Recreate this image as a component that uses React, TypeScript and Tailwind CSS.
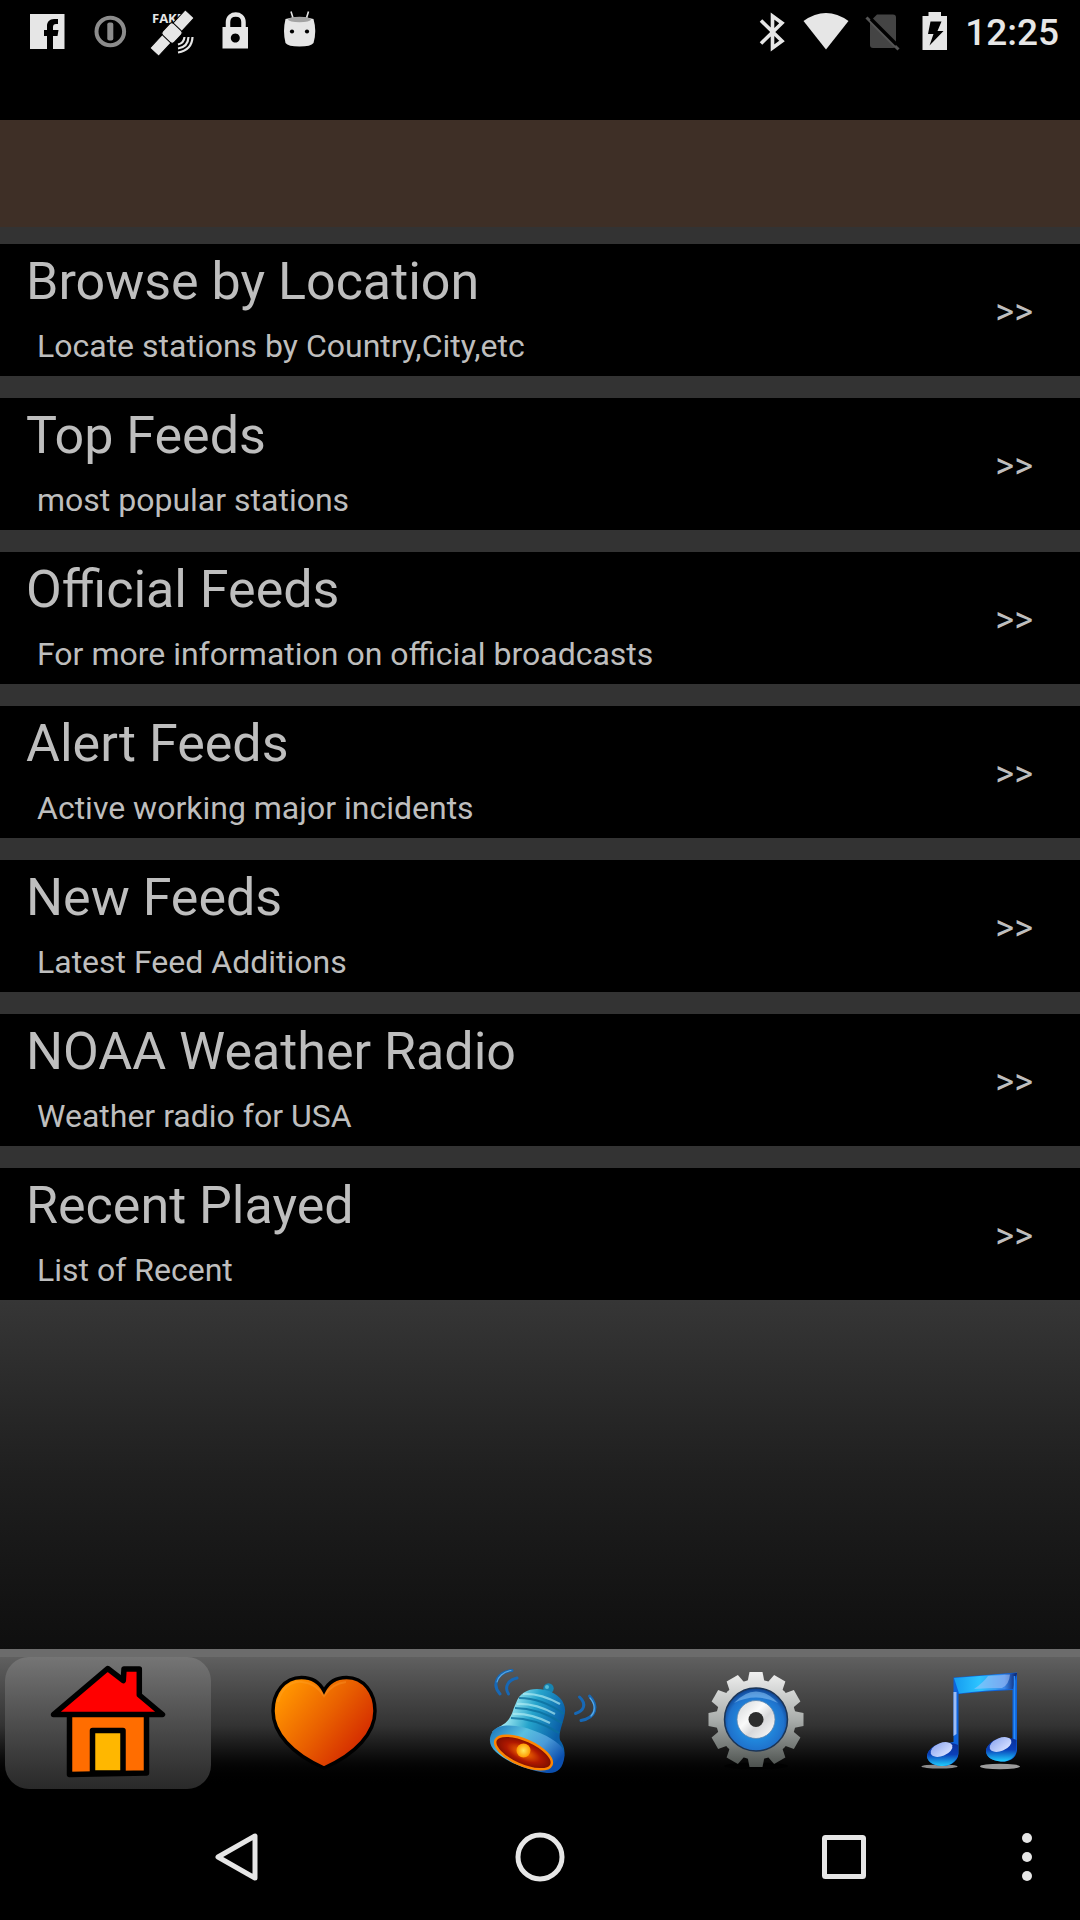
import type { ReactNode } from "react";

const feeds = [
  { title: "Browse by Location", detail: "Locate stations by Country,City,etc" },
  { title: "Top Feeds", detail: "most popular stations" },
  { title: "Official Feeds", detail: "For more information on official broadcasts" },
  { title: "Alert Feeds", detail: "Active working major incidents" },
  { title: "New Feeds", detail: "Latest Feed Additions" },
  { title: "NOAA Weather Radio", detail: "Weather radio for USA" },
  { title: "Recent Played", detail: "List of Recent" },
];

function Glyph({ children }: { children: ReactNode }) {
  return (
    <svg className="size-[63px]" viewBox="0 0 63 63" fill="#e6e6e6" aria-hidden="true">
      {children}
    </svg>
  );
}

function SmallGlyph({ children }: { children: ReactNode }) {
  return (
    <svg className="h-[63px] w-[54px]" viewBox="0 0 54 63" fill="#e6e6e6" aria-hidden="true">
      {children}
    </svg>
  );
}

function StatusBar() {
  return (
    <div className="flex items-center justify-between pr-[21px] pl-4">
      <div className="flex">
        <Glyph>
          <path d="M14 14H48.500V49H37V36H41.500L42.500 30H37V27C37 25 38 24 40 24H42V19H38C33.500 19 31 22 31 26V30H28V36H31V49H14Z" />
        </Glyph>
        <Glyph>
          <circle cx="31.300" cy="31.500" r="13.800" fill="none" stroke="#8c8c8c" strokeWidth="4" />
          <rect x="28.300" y="22.500" width="6" height="18" rx="2" fill="#8c8c8c" />
        </Glyph>
        <Glyph>
          <text x="10" y="23" fontFamily="Open Sans, sans-serif" fontWeight="700" fontSize="13">FAKE</text>
          <g transform="translate(30 33) rotate(-47)" stroke="#000" strokeWidth="1">
            <rect x="-26" y="-6" width="19" height="12" />
            <rect x="7" y="-6" width="19" height="12" />
            <rect x="-8" y="-8" width="16" height="16" rx="3" />
          </g>
          <g fill="none" stroke="#e6e6e6" strokeWidth="2.200">
            <path d="M36 44.500Q42 43 42.500 37M36 48.500Q46 47 46.500 37M36 52.500Q50 50 50.500 37" />
          </g>
        </Glyph>
        <Glyph>
          <path d="M23 28V22C23 12 38.500 12 38.500 22V28" fill="none" stroke="#e6e6e6" strokeWidth="4.500" />
          <path fillRule="evenodd" d="M17.500 27H43V48.500H17.500ZM30.300 33.500A4.500 4.500 0 1 0 30.310 33.500Z" />
        </Glyph>
        <Glyph>
          <path d="M23 11.500L25 18M40.500 11.500L38.500 18" stroke="#e6e6e6" strokeWidth="1.600" />
          <path d="M17.500 19Q32 15 45.500 19Q49 31 45.500 43Q43 46.500 31.500 46.500Q20 46.500 17.500 43Q14.500 31 17.500 19Z" />
          <ellipse cx="31.500" cy="19.500" rx="11.500" ry="2.800" fill="#a3a3a3" />
          <circle cx="24" cy="31.500" r="2.100" fill="#000" />
          <circle cx="39" cy="31.500" r="2.100" fill="#000" />
        </Glyph>
      </div>
      <div className="flex items-center">
        <SmallGlyph>
          <path d="M16 20.500L37 41L27.500 48V16L37 23L16 43.500" fill="none" stroke="#e6e6e6" strokeWidth="3.600" />
        </SmallGlyph>
        <SmallGlyph>
          <path d="M4.500 21Q27 5 49.500 21L27 49.500Z" />
        </SmallGlyph>
        <SmallGlyph>
          <path d="M17 21.500L24 14.500H40Q43 14.500 43 17.500V45Q43 48 40 48H20Q17 48 17 45Z" fill="#444" />
          <path d="M13.500 17.500L45.500 49.500" stroke="#555" strokeWidth="3" />
          <path d="M18 19L43.500 44.500" stroke="#000" strokeWidth="3.400" />
        </SmallGlyph>
        <SmallGlyph>
          <path fillRule="evenodd" d="M21.500 12H34V16H40V50H15.500V16H21.500ZM23.500 21.500L21 34H26.500L22.500 45.500L36.500 31H30.500L34.500 21.500Z" />
        </SmallGlyph>
        <time className="pt-0.5 pl-1 text-[37px] leading-10 font-medium text-[#e6e6e6]">12:25</time>
      </div>
    </div>
  );
}

function TabIcon({ children }: { children: ReactNode }) {
  return (
    <svg className="size-[120px]" viewBox="0 0 120 120" aria-hidden="true">
      {children}
    </svg>
  );
}

function HomeIcon() {
  return (
    <TabIcon>
      <g stroke="#000" strokeWidth="5.500" strokeLinejoin="round">
        <path d="M21.500 52H98.500V111L21.500 112.500Z" fill="#ff6d00" />
        <path d="M44.500 68.500H75V111H44.500Z" fill="#ffb700" />
        <path d="M5.500 52.500L59.700 6.500L75.300 18.500L76 7H91.300V33L114.500 52.500Z" fill="#f00" />
      </g>
    </TabIcon>
  );
}

function HeartIcon() {
  return (
    <TabIcon>
      <defs>
        <linearGradient id="heart" x1="0.100" y1="0.200" x2="0.900" y2="0.750">
          <stop offset="0" stopColor="#ff9200" />
          <stop offset="0.500" stopColor="#e96000" />
          <stop offset="1" stopColor="#d32800" />
        </linearGradient>
      </defs>
      <path
        d="M60 29C55 19 47 15.500 37.500 15.500C20 15.500 9 31 9 49C9 71 28 92 60 106C92 92 111 71 111 49C111 31 100 15.500 82.500 15.500C73 15.500 65 19 60 29Z"
        fill="url(#heart)"
        stroke="#000"
        strokeWidth="3.500"
      />
      <path d="M14 40C18 24 29 19 38 20C49 21 55 26 60 34C65 26 73 21 82 20" fill="none" stroke="#ffae42" strokeOpacity="0.250" strokeWidth="2" />
    </TabIcon>
  );
}

function BellIcon() {
  return (
    <TabIcon>
      <defs>
        <linearGradient id="bellBody" x1="0" y1="0" x2="1" y2="0.350">
          <stop offset="0" stopColor="#1187b5" />
          <stop offset="0.300" stopColor="#9be6f0" />
          <stop offset="0.600" stopColor="#25a4cc" />
          <stop offset="1" stopColor="#0a5fa8" />
        </linearGradient>
        <linearGradient id="bellRim" x1="0" y1="0" x2="1" y2="0.600">
          <stop offset="0" stopColor="#1570b8" />
          <stop offset="0.400" stopColor="#59c0e0" />
          <stop offset="0.700" stopColor="#4a9bd8" />
          <stop offset="1" stopColor="#0b4fae" />
        </linearGradient>
        <radialGradient id="bellInside">
          <stop offset="0" stopColor="#ff7a00" />
          <stop offset="0.600" stopColor="#b01800" />
          <stop offset="1" stopColor="#7a0d00" />
        </radialGradient>
        <radialGradient id="clapper">
          <stop offset="0" stopColor="#ffe85a" />
          <stop offset="1" stopColor="#ff9a00" />
        </radialGradient>
      </defs>
      <circle cx="68.500" cy="26.500" r="5.200" fill="#1784b0" />
      <circle cx="67" cy="25" r="2" fill="#57bcd6" />
      <path d="M36 41C40 29 52 25 65 28C79 31 86 41 85 50C84 60 78 70 80 78C84 83 86 90 83 98L12 70C18 64 24 64 29 57C33 51 33 47 36 41Z" fill="url(#bellBody)" />
      <g fill="none" strokeWidth="2.200">
        <path d="M39 36Q62 36 84 52M35 46Q58 46 82 61M31 56Q55 56 79 71" stroke="#0b6f9e" strokeOpacity="0.800" />
        <path d="M43 32Q60 31 80 42M37 42Q55 41 75 52M33 52Q50 51 70 61" stroke="#b4eef5" strokeOpacity="0.650" />
      </g>
      <path d="M13 69C20 60 42 63 60 71C78 79 85 86 84.500 94C83 107 77 112 67 111C50 108 31 103 16 90C9 84 8 76 13 69Z" fill="url(#bellRim)" />
      <ellipse cx="43.500" cy="90.500" rx="30.500" ry="12.500" transform="rotate(24 43.500 90.500)" fill="url(#bellInside)" stroke="#ff8500" strokeWidth="2.500" />
      <circle cx="43.500" cy="88.500" r="7" fill="url(#clapper)" />
      <g fill="none" stroke="#1768b5" strokeWidth="3" strokeLinecap="round">
        <path d="M32 8.500C18 10 11 22 20 32M37 16C28 18 24 25 28.500 32" />
        <path d="M109.500 34C119 44 116 56 101 58.500M99.500 35C107 42 104 49 95.500 51.500" />
      </g>
      <g fill="none" stroke="#58a8e4" strokeWidth="1.200" strokeLinecap="round">
        <path d="M31 8.500C23 10 18 15 17 20M110 36C116 43 115 50 111 54" />
      </g>
    </TabIcon>
  );
}

const gearTeeth = [0, 30, 60, 90, 120, 150, 180, 210, 240, 270, 300, 330];

function GearIcon() {
  return (
    <TabIcon>
      <defs>
        <linearGradient id="gear" gradientUnits="userSpaceOnUse" x1="60" y1="10" x2="60" y2="106">
          <stop offset="0" stopColor="#f0f0f0" />
          <stop offset="0.500" stopColor="#a9adab" />
          <stop offset="1" stopColor="#4a4f4c" />
        </linearGradient>
        <radialGradient id="gearBlue" cx="0.500" cy="0.550" r="0.550">
          <stop offset="0.500" stopColor="#2187dc" />
          <stop offset="0.800" stopColor="#1f72cc" />
          <stop offset="1" stopColor="#0d3e8a" />
        </radialGradient>
        <linearGradient id="gearHub" x1="0" y1="0" x2="1" y2="1">
          <stop offset="0" stopColor="#d0d2d4" />
          <stop offset="0.400" stopColor="#fafafa" />
          <stop offset="0.600" stopColor="#d8d8da" />
          <stop offset="1" stopColor="#fff" />
        </linearGradient>
        <mask id="gearShape">
          <circle cx="60" cy="57.500" r="40" fill="#fff" />
          {gearTeeth.map((angle) => (
            <path key={angle} d="M51.500 20L53.500 10H66.500L68.500 20Z" fill="#fff" transform={`rotate(${angle} 60 57.500)`} />
          ))}
        </mask>
      </defs>
      <ellipse cx="60" cy="104" rx="32" ry="3.500" fill="#000" fillOpacity="0.700" />
      <rect width="120" height="120" fill="url(#gear)" mask="url(#gearShape)" />
      <circle cx="60" cy="57.500" r="31.500" fill="url(#gearBlue)" stroke="#1b3557" strokeWidth="1.500" />
      <path d="M38 41Q60 18 82 41Q60 30 38 41Z" fill="#8cc4f4" fillOpacity="0.550" />
      <circle cx="60" cy="57.500" r="19" fill="url(#gearHub)" stroke="#5f88b0" strokeWidth="0.800" />
      <circle cx="60" cy="57.500" r="7.500" fill="#2d2d2d" />
    </TabIcon>
  );
}

function MusicIcon() {
  return (
    <TabIcon>
      <defs>
        <linearGradient id="noteBeam" x1="0" y1="0" x2="1" y2="0">
          <stop offset="0" stopColor="#159bf0" />
          <stop offset="0.400" stopColor="#2cc4ff" />
          <stop offset="0.800" stopColor="#3a86e8" />
          <stop offset="1" stopColor="#08206e" />
        </linearGradient>
        <linearGradient id="noteHead" x1="0" y1="0" x2="0" y2="1">
          <stop offset="0" stopColor="#0a2f9a" />
          <stop offset="0.500" stopColor="#0a3fb8" />
          <stop offset="1" stopColor="#1fd0ff" />
        </linearGradient>
        <linearGradient id="noteShine" x1="0" y1="0" x2="0.600" y2="1">
          <stop offset="0" stopColor="#8fa8f0" />
          <stop offset="1" stopColor="#d0dcff" />
        </linearGradient>
      </defs>
      <ellipse cx="27.500" cy="104.500" rx="18" ry="2" fill="#8c8c8c" />
      <ellipse cx="88" cy="104.500" rx="20" ry="2.700" fill="#9c9c9c" />
      <path d="M41.500 15.500L105 10.500V88C104 98 95 100 89 99.500C79 99 74 94 74 89C75 78 92 78 100.500 77V28Q75 29 46.500 32V92C45 102 35 104.500 29 104C19 103.500 15 98 15 94C17 82 33 82 41.500 80Z" fill="#0d63dc" />
      <path d="M42 16L105 11L101 27Q72 28 47 31.500Z" fill="url(#noteBeam)" />
      <path d="M62 27Q72 20 76 14L98 12.500Q97 23 90 26Q76 26 62 27Z" fill="#a9c4f8" fillOpacity="0.550" />
      <path d="M41.500 30H44.500V72L41.500 74Z" fill="#9cbcf5" />
      <path d="M102.500 14V86" stroke="#2c8cf4" strokeWidth="1.500" />
      <path d="M15 94C17 81 36 78 46 83V92C44 101 36 104.500 29 104C19 103 15 98 15 94Z" fill="url(#noteHead)" />
      <path d="M74 89C76 76 94 73 104.500 78V88C103 97 95 100 89 99.500C79 99 74 94 74 89Z" fill="url(#noteHead)" />
      <ellipse cx="29.500" cy="87.500" rx="11.500" ry="6.500" transform="rotate(-22 29.500 87.500)" fill="url(#noteShine)" />
      <ellipse cx="88.500" cy="82.500" rx="11.500" ry="6.500" transform="rotate(-22 88.500 82.500)" fill="url(#noteShine)" />
    </TabIcon>
  );
}

const tabs = [
  { label: "Home", icon: <HomeIcon />, selected: true },
  { label: "Favorites", icon: <HeartIcon />, selected: false },
  { label: "Alerts", icon: <BellIcon />, selected: false },
  { label: "Settings", icon: <GearIcon />, selected: false },
  { label: "Music", icon: <MusicIcon />, selected: false },
];

function TabBar() {
  return (
    <nav className="grid grid-cols-5 border-t-8 border-[#6c6c6c] bg-linear-to-b from-[#606060] via-[#333] via-50% to-black to-95% pb-[5px]" aria-label="Sections">
      {tabs.map((tab) => (
        <button
          key={tab.label}
          type="button"
          aria-label={tab.label}
          aria-current={tab.selected ? "page" : undefined}
          className={
            tab.selected
              ? "mx-[5px] flex h-[132px] items-center justify-center rounded-3xl bg-linear-to-b from-[#757575] to-[#292929] pb-0.5"
              : "flex h-[132px] items-center justify-center pb-0.5"
          }
        >
          {tab.icon}
        </button>
      ))}
    </nav>
  );
}

function SystemNavigation() {
  return (
    <nav className="flex h-[126px] bg-black pl-[84px]" aria-label="System">
      <button type="button" aria-label="Back" className="flex flex-1 items-center justify-center">
        <svg className="size-[52px]" viewBox="0 0 52 52" fill="none" stroke="#e6e6e6" strokeWidth="5" strokeLinejoin="round">
          <path d="M45 5V47L8 26Z" />
        </svg>
      </button>
      <button type="button" aria-label="Home" className="flex flex-1 items-center justify-center">
        <svg className="size-[52px]" viewBox="0 0 52 52" fill="none" stroke="#e6e6e6" strokeWidth="5">
          <circle cx="26" cy="26" r="22" />
        </svg>
      </button>
      <button type="button" aria-label="Recent apps" className="flex flex-1 items-center justify-center">
        <svg className="size-[52px]" viewBox="0 0 52 52" fill="none" stroke="#e6e6e6" strokeWidth="5">
          <rect x="6.500" y="6.500" width="39" height="39" rx="1" />
        </svg>
      </button>
      <button type="button" aria-label="More options" className="flex w-[84px] items-center justify-center pr-[22px]">
        <svg className="size-[52px]" viewBox="0 0 52 52" fill="#e6e6e6">
          <circle cx="26" cy="7" r="5" />
          <circle cx="26" cy="26" r="5" />
          <circle cx="26" cy="45" r="5" />
        </svg>
      </button>
    </nav>
  );
}

export default function App() {
  return (
    <div className="flex min-h-screen flex-col bg-black font-['Roboto',sans-serif] text-[#bebebe]">
      <header className="h-[120px]">
        <StatusBar />
      </header>
      <div className="h-[107px] bg-[#3e2f26]" />
      <main className="flex flex-1 flex-col bg-[#333] pt-[17px]">
        <ul className="flex flex-col gap-[22px]">
          {feeds.map((feed) => (
            <li key={feed.title}>
              <button type="button" className="flex h-[132px] w-full items-center justify-between bg-black pr-[47px] pl-[26px] text-left">
                <span className="flex flex-col gap-4">
                  <span className="text-[52px] leading-[56px]">{feed.title}</span>
                  <span className="pl-[11px] text-[32px] leading-10">{feed.detail}</span>
                </span>
                <span className="pt-1 text-[36px] leading-10">&gt;&gt;</span>
              </button>
            </li>
          ))}
        </ul>
        <div className="flex-1 bg-linear-to-b from-[#363636] via-[#1f1f1f] via-50% to-[#0f0f0f]" />
      </main>
      <TabBar />
      <SystemNavigation />
    </div>
  );
}
